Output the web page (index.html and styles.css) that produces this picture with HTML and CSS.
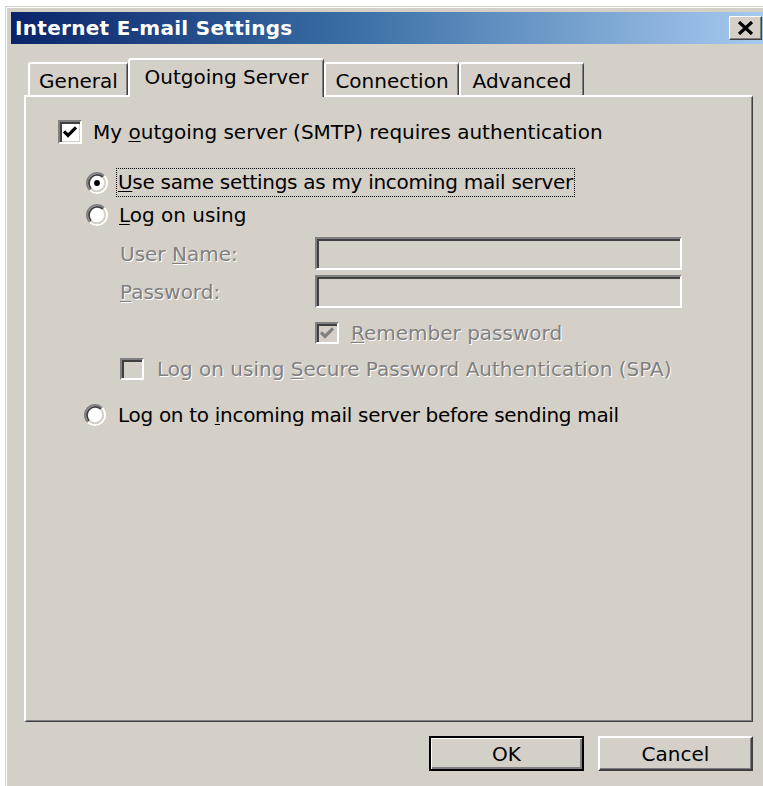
FILE: index.html
```html
<!DOCTYPE html>
<html lang="en">
<head>
<meta charset="utf-8">
<title>Internet E-mail Settings</title>
<link rel="stylesheet" href="styles.css">
</head>
<body>
<div class="window">
  <div class="titlebar">
    <span class="title">Internet E-mail Settings</span>
    <button class="close" aria-label="Close">
      <svg width="17" height="14" viewBox="0 0 17 14"><path d="M2 1 L15 13 M15 1 L2 13" stroke="#000" stroke-width="3.2" fill="none"/></svg>
    </button>
  </div>
  <div class="client">
    <div class="tabs">
      <div class="tab tab-general">General</div>
      <div class="tab tab-outgoing active">Outgoing Server</div>
      <div class="tab tab-connection">Connection</div>
      <div class="tab tab-advanced">Advanced</div>
    </div>
    <div class="panel">
      <div class="row row-auth">
        <span class="cb"><svg width="16" height="14" viewBox="0 0 8 7"><path d="M1 3.2 L3 5.2 L7 1.2" stroke="#000" stroke-width="1.6" fill="none"/></svg></span>
        <span class="label">My <u>o</u>utgoing server (SMTP) requires authentication</span>
      </div>
      <div class="row row-same">
        <span class="radio"><svg width="24" height="22" viewBox="0 0 12 12"><circle cx="6" cy="6" r="4.6" fill="#fff"/><path d="M2.11 9.89 A5.5 5.5 0 0 1 9.89 2.11" stroke="#808080" fill="none"/><path d="M9.89 2.11 A5.5 5.5 0 0 1 2.11 9.89" stroke="#fff" fill="none"/><path d="M2.82 9.18 A4.5 4.5 0 0 1 9.18 2.82" stroke="#404040" fill="none"/><path d="M9.18 2.82 A4.5 4.5 0 0 1 2.82 9.18" stroke="#d4d0c8" fill="none"/><circle cx="6" cy="6" r="1.6" fill="#000"/></svg></span>
        <span class="label focus tight"><u>U</u>se same settings as my incoming mail server</span>
      </div>
      <div class="row row-logon">
        <span class="radio"><svg width="24" height="22" viewBox="0 0 12 12"><circle cx="6" cy="6" r="4.6" fill="#fff"/><path d="M2.11 9.89 A5.5 5.5 0 0 1 9.89 2.11" stroke="#808080" fill="none"/><path d="M9.89 2.11 A5.5 5.5 0 0 1 2.11 9.89" stroke="#fff" fill="none"/><path d="M2.82 9.18 A4.5 4.5 0 0 1 9.18 2.82" stroke="#404040" fill="none"/><path d="M9.18 2.82 A4.5 4.5 0 0 1 2.82 9.18" stroke="#d4d0c8" fill="none"/></svg></span>
        <span class="label plain"><u>L</u>og on using</span>
      </div>
      <div class="fields">
        <span class="field-label disabled">User <u>N</u>ame:</span>
        <span class="textbox"></span>
        <span class="field-label disabled"><u>P</u>assword:</span>
        <span class="textbox"></span>
      </div>
      <div class="row row-remember">
        <span class="cb off"><svg width="16" height="14" viewBox="0 0 8 7"><path d="M1 3.2 L3 5.2 L7 1.2" stroke="#808080" stroke-width="1.6" fill="none"/></svg></span>
        <span class="label disabled"><u>R</u>emember password</span>
      </div>
      <div class="row row-spa">
        <span class="cb off"></span>
        <span class="label disabled">Log on using <u>S</u>ecure Password Authentication (SPA)</span>
      </div>
      <div class="row row-before">
        <span class="radio"><svg width="24" height="22" viewBox="0 0 12 12"><circle cx="6" cy="6" r="4.6" fill="#fff"/><path d="M2.11 9.89 A5.5 5.5 0 0 1 9.89 2.11" stroke="#808080" fill="none"/><path d="M9.89 2.11 A5.5 5.5 0 0 1 2.11 9.89" stroke="#fff" fill="none"/><path d="M2.82 9.18 A4.5 4.5 0 0 1 9.18 2.82" stroke="#404040" fill="none"/><path d="M9.18 2.82 A4.5 4.5 0 0 1 2.82 9.18" stroke="#d4d0c8" fill="none"/></svg></span>
        <span class="label tight">Log on to <u>i</u>ncoming mail server before sending mail</span>
      </div>
    </div>
    <div class="buttons">
      <button class="btn default">OK</button>
      <button class="btn">Cancel</button>
    </div>
  </div>
</div>
</body>
</html>
```

FILE: styles.css
```css
html, body {
  margin: 0;
  padding: 0;
  background: #fff;
  width: 763px;
  height: 786px;
  overflow: hidden;
}

body {
  font-family: "DejaVu Sans", Verdana, sans-serif;
  font-size: 20px;
  color: #000;
}

u {
  text-decoration-thickness: 1px;
  text-underline-offset: 2px;
}

/* dialog frame */
.window {
  box-sizing: border-box;
  margin: 6px 0 0 5px;
  width: 758px;
  height: 780px;
  padding: 6px 0 0 6px;
  background: #d4d0c8;
  box-shadow: inset 1px 1px 0 #d4d0c8, inset 2px 2px 0 #fff;
}

.titlebar {
  height: 32px;
  display: flex;
  align-items: center;
  justify-content: space-between;
  background: linear-gradient(to right, #0a246a 0%, #3a6ea5 45%, #a6caf0 100%);
}

.title {
  padding-left: 4px;
  color: #fff;
  font-weight: bold;
  font-size: 20px;
  letter-spacing: 0.3px;
}

.close {
  box-sizing: border-box;
  width: 33px;
  height: 24px;
  margin-right: 1px;
  padding: 0;
  display: flex;
  align-items: center;
  justify-content: center;
  background: #d4d0c8;
  border: 1px solid;
  border-color: #fff #404040 #404040 #fff;
  box-shadow: inset -1px -1px 0 #808080;
}

.client {
  padding-left: 13px;
}

/* tab strip */
.tabs {
  display: flex;
  align-items: flex-end;
  height: 37px;
  margin-top: 14px;
  padding-left: 4px;
}

.tab {
  box-sizing: border-box;
  height: 33px;
  display: flex;
  align-items: center;
  justify-content: center;
  padding-top: 3px;
  border-top: 2px solid #fff;
  border-left: 2px solid #fff;
  border-right: 1px solid #404040;
  border-radius: 3px 3px 0 0;
  box-shadow: inset -1px 0 0 #808080;
  background: #d4d0c8;
}

.tab-general { width: 100px; }
.tab-outgoing { width: 196px; }
.tab-connection { width: 135px; }
.tab-advanced { width: 125px; }

.tab.active {
  position: relative;
  z-index: 1;
  height: 39px;
  margin-bottom: -2px;
  padding-top: 0;
  padding-bottom: 4px;
}

/* page of the property sheet */
.panel {
  box-sizing: border-box;
  width: 729px;
  height: 627px;
  padding-top: 23px;
  border-top: 2px solid #fff;
  border-left: 2px solid #fff;
  border-right: 1px solid #404040;
  border-bottom: 1px solid #404040;
  box-shadow: inset -1px -1px 0 #808080;
}

.row {
  display: flex;
  align-items: center;
}

.label {
  white-space: nowrap;
  line-height: 24px;
}

.tight {
  letter-spacing: -0.3px;
}

.focus {
  padding: 1px 1px 2px 1px;
  border: 1px dotted #000;
}

.disabled {
  color: #808080;
  text-shadow: 1px 1px 0 #fff;
}

.cb {
  box-sizing: border-box;
  width: 24px;
  height: 24px;
  display: flex;
  align-items: center;
  justify-content: center;
  background: #fff;
  border: 2px solid;
  border-color: #808080 #fff #fff #808080;
  box-shadow: inset 2px 2px 0 #404040, inset -1px -1px 0 #d4d0c8;
}

.cb.off {
  background: #d4d0c8;
  height: 22px;
}

.radio {
  display: flex;
  width: 24px;
  height: 22px;
}

.row-auth {
  margin-left: 32px;
  gap: 11px;
}

.row-same {
  margin-top: 24px;
  margin-left: 59px;
  gap: 7px;
  height: 29px;
}

.row-logon {
  margin-top: 5px;
  margin-left: 59px;
  gap: 7px;
  height: 26px;
}

.plain {
  padding-left: 2px;
  border: 1px solid transparent;
}

.fields {
  display: grid;
  grid-template-columns: 195px 367px;
  grid-auto-rows: 33px;
  row-gap: 5px;
  margin-top: 9px;
  margin-left: 94px;
  align-items: center;
}

.textbox {
  box-sizing: border-box;
  height: 33px;
  background: #d4d0c8;
  border: 2px solid;
  border-color: #808080 #fff #fff #808080;
  box-shadow: inset 2px 2px 0 #404040, inset -1px -1px 0 #d4d0c8;
}

.row-remember {
  margin-top: 14px;
  margin-left: 289px;
  gap: 12px;
  height: 22px;
}

.row-spa {
  margin-top: 14px;
  margin-left: 94px;
  gap: 13px;
  height: 22px;
}

.row-before {
  margin-top: 23px;
  margin-left: 57px;
  gap: 11px;
  height: 24px;
}

/* dialog buttons */
.buttons {
  display: flex;
  justify-content: flex-end;
  gap: 14px;
  width: 729px;
  margin-top: 14px;
}

.btn {
  box-sizing: border-box;
  width: 155px;
  height: 35px;
  padding: 0;
  font-family: inherit;
  font-size: 20px;
  color: #000;
  background: #d4d0c8;
  border: 2px solid;
  border-color: #fff #404040 #404040 #fff;
  box-shadow: inset -1px -1px 0 #808080;
}

.btn.default {
  border: 2px solid #000;
  box-shadow: inset 1px 1px 0 #fff, inset -2px -2px 0 #808080;
}
```
